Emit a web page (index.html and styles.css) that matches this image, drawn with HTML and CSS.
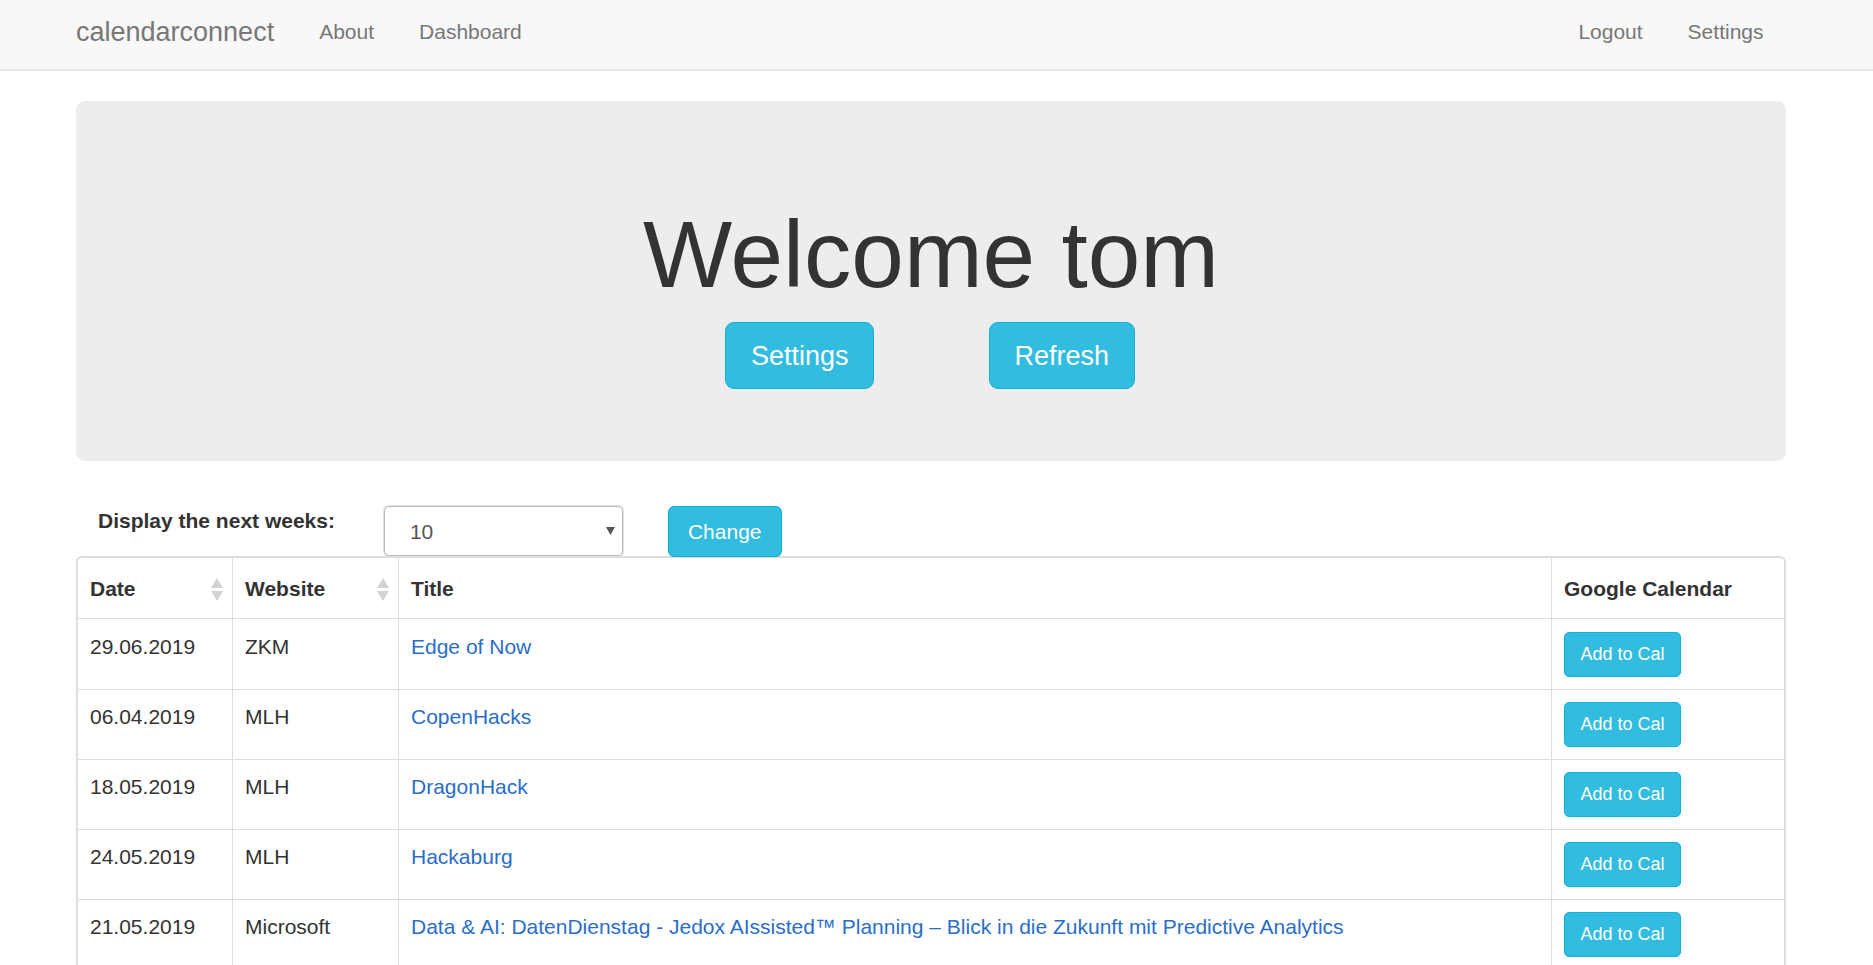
FILE: index.html
```html
<!DOCTYPE html>
<html lang="en">
<head>
<meta charset="utf-8">
<title>calendarconnect</title>
<link rel="stylesheet" href="styles.css">
</head>
<body>
<nav class="navbar">
  <div class="nav-inner">
    <div class="nav-left">
      <a class="brand" href="#">calendarconnect</a>
      <a class="nav-link" href="#">About</a>
      <a class="nav-link" href="#">Dashboard</a>
    </div>
    <div class="nav-right">
      <a class="nav-link" href="#">Logout</a>
      <a class="nav-link" href="#">Settings</a>
    </div>
  </div>
</nav>

<main class="container">
  <section class="jumbotron">
    <h1 class="welcome">Welcome tom</h1>
    <div class="jumbo-actions">
      <button class="btn btn-lg">Settings</button>
      <button class="btn btn-lg">Refresh</button>
    </div>
  </section>

  <form class="weeks-form">
    <label class="weeks-label">Display the next weeks:</label>
    <div class="select-box">
      <span class="select-value">10</span>
      <svg class="select-arrow" width="9" height="8" viewBox="0 0 9 8"><polygon points="0,0 9,0 4.5,8" fill="#555"/></svg>
    </div>
    <button type="button" class="btn btn-md">Change</button>
  </form>

  <table class="events">
    <colgroup>
      <col class="c-date">
      <col class="c-site">
      <col class="c-title">
      <col class="c-cal">
    </colgroup>
    <thead>
      <tr>
        <th><div class="th-inner"><span>Date</span><svg class="sort" width="14" height="24" viewBox="0 0 14 24"><polygon points="7,1 13,11 1,11" fill="#d3d3d3"/><polygon points="1,14 13,14 7,24" fill="#d3d3d3"/></svg></div></th>
        <th><div class="th-inner"><span>Website</span><svg class="sort" width="14" height="24" viewBox="0 0 14 24"><polygon points="7,1 13,11 1,11" fill="#d3d3d3"/><polygon points="1,14 13,14 7,24" fill="#d3d3d3"/></svg></div></th>
        <th><div class="th-inner"><span>Title</span></div></th>
        <th><div class="th-inner"><span>Google Calendar</span></div></th>
      </tr>
    </thead>
    <tbody>
      <tr>
        <td>29.06.2019</td>
        <td>ZKM</td>
        <td><a href="#">Edge of Now</a></td>
        <td><button class="btn btn-sm">Add to Cal</button></td>
      </tr>
      <tr>
        <td>06.04.2019</td>
        <td>MLH</td>
        <td><a href="#">CopenHacks</a></td>
        <td><button class="btn btn-sm">Add to Cal</button></td>
      </tr>
      <tr>
        <td>18.05.2019</td>
        <td>MLH</td>
        <td><a href="#">DragonHack</a></td>
        <td><button class="btn btn-sm">Add to Cal</button></td>
      </tr>
      <tr>
        <td>24.05.2019</td>
        <td>MLH</td>
        <td><a href="#">Hackaburg</a></td>
        <td><button class="btn btn-sm">Add to Cal</button></td>
      </tr>
      <tr>
        <td>21.05.2019</td>
        <td>Microsoft</td>
        <td><a href="#">Data &amp; AI: DatenDienstag - Jedox AIssisted™ Planning – Blick in die Zukunft mit Predictive Analytics</a></td>
        <td><button class="btn btn-sm">Add to Cal</button></td>
      </tr>
    </tbody>
  </table>
</main>
</body>
</html>
```

FILE: styles.css
```css
html, body {
  margin: 0;
  padding: 0;
}

body {
  font-family: "Liberation Sans", Arial, sans-serif;
  font-size: 21px;
  line-height: 30px;
  color: #333;
  background: #fff;
  overflow: hidden;
}

a {
  text-decoration: none;
}

/* Navbar */
.navbar {
  background: #f8f8f8;
  border-bottom: 2px solid #e7e7e7;
  height: 69px;
}

.nav-inner {
  width: 1710px;
  margin-left: 76px;
  display: flex;
  justify-content: space-between;
}

.nav-left,
.nav-right {
  display: flex;
}

.brand {
  font-size: 27px;
  line-height: 30px;
  color: #777;
  padding: 17px 22.5px 22px 0;
}

.nav-link {
  font-size: 21px;
  line-height: 30px;
  color: #777;
  padding: 17px 22.5px 22px;
}

/* Container */
.container {
  width: 1710px;
  margin-left: 76px;
}

/* Jumbotron */
.jumbotron {
  margin-top: 30px;
  background: #ededed;
  border-radius: 9px;
  padding: 72px 0;
  text-align: center;
}

.welcome {
  margin: 30px 0 15px;
  font-size: 94.5px;
  line-height: 1.1;
  font-weight: normal;
  color: #333;
}

.jumbo-actions {
  display: flex;
  justify-content: center;
  gap: 115px;
  margin-left: -2px;
}

/* Buttons */
.btn {
  font-family: "Liberation Sans", Arial, sans-serif;
  color: #fff;
  background: #31bce0;
  border: 1px solid #13b0d9;
  cursor: pointer;
}

.btn-lg {
  font-size: 27px;
  line-height: 36px;
  padding: 15px 24.5px 14px;
  border-radius: 9px;
}

.btn-md {
  font-size: 21px;
  line-height: 30px;
  padding: 10px 19px 9px;
  border-radius: 6px;
}

.btn-sm {
  font-size: 18px;
  line-height: 27px;
  padding: 8px 15.5px;
  border-radius: 5px;
}

/* Weeks form */
.weeks-form {
  margin: 30px 0 0;
  padding-top: 15px;
  height: 51px;
  display: flex;
  align-items: flex-start;
}

.weeks-label {
  margin-left: 22px;
  font-weight: bold;
  font-size: 21px;
  line-height: 30px;
}

.select-box {
  margin-left: 49px;
  width: 239px;
  height: 50px;
  box-sizing: border-box;
  border: 1px solid #b9b9b9;
  box-shadow: 0 0 0 1px #e2e2e2;
  border-radius: 5px;
  background: #fff;
  display: flex;
  align-items: center;
  justify-content: space-between;
  padding: 3px 7px 0 25px;
}

.select-value {
  font-size: 21px;
  color: #555;
}

.select-arrow {
  margin-top: -3px;
}

.weeks-form .btn-md {
  margin-left: 45px;
}

/* Table */
.events {
  width: 1710px;
  margin-top: -1px;
  table-layout: fixed;
  border-collapse: separate;
  border-spacing: 0;
  border: 2px solid #ddd;
  border-radius: 6px;
}

.c-date { width: 154px; }
.c-site { width: 166px; }
.c-title { width: 1153px; }
.c-cal { width: 233px; }

.events th,
.events td {
  text-align: left;
  vertical-align: top;
}

.events th + th,
.events td + td {
  border-left: 1px solid #ddd;
}

.events th {
  padding: 16px 8px 14px 12px;
  font-weight: bold;
}

.th-inner {
  display: flex;
  align-items: center;
  justify-content: space-between;
}

.events td {
  border-top: 1px solid #ddd;
  padding: 12px;
}

.events tbody tr:first-child td {
  padding-top: 13px;
}

.events td a {
  color: #2a6ec9;
}
```
